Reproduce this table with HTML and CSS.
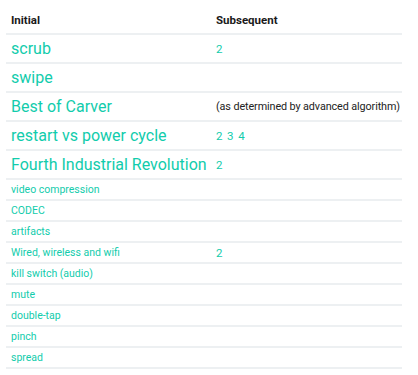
FILE: index.html
```html
<!DOCTYPE html>
<html lang="en">
<head>
<meta charset="utf-8">
<title>Terms</title>
<link rel="stylesheet" href="styles.css">
</head>
<body>
<table class="terms">
  <colgroup><col class="col-a"><col class="col-b"></colgroup>
  <thead>
    <tr><th>Initial</th><th>Subsequent</th></tr>
  </thead>
  <tbody>
    <tr class="big"><td><a>scrub</a></td><td><a class="ref">2</a></td></tr>
    <tr class="big"><td><a>swipe</a></td><td></td></tr>
    <tr class="big"><td><a>Best of Carver</a></td><td class="note">(as determined by advanced algorithm)</td></tr>
    <tr class="big"><td><a>restart vs power cycle</a></td><td><a class="ref">2</a> <a class="ref">3</a> <a class="ref">4</a></td></tr>
    <tr class="big"><td><a>Fourth Industrial Revolution</a></td><td><a class="ref">2</a></td></tr>
    <tr><td><a>video compression</a></td><td></td></tr>
    <tr><td><a>CODEC</a></td><td></td></tr>
    <tr><td><a>artifacts</a></td><td></td></tr>
    <tr><td><a>Wired, wireless and wifi</a></td><td><a class="ref">2</a></td></tr>
    <tr><td><a>kill switch (audio)</a></td><td></td></tr>
    <tr><td><a>mute</a></td><td></td></tr>
    <tr><td><a>double-tap</a></td><td></td></tr>
    <tr><td><a>pinch</a></td><td></td></tr>
    <tr><td><a>spread</a></td><td></td></tr>
  </tbody>
</table>
</body>
</html>
```
FILE: styles.css
```css
html, body {
  margin: 0;
  padding: 0;
  background: #ffffff;
}

body {
  font-family: Roboto, "Open Sans", sans-serif;
  color: #222222;
  padding: 0 16px 0 6px;
}

.terms {
  width: 396px;
  table-layout: fixed;
  border-collapse: collapse;
  margin-top: 12px;
}

.terms .col-a {
  width: 205px;
}

.terms th {
  text-align: left;
  font-size: 11.5px;
  font-weight: 700;
  color: #1a1a1a;
  padding: 0 0 5px 5px;
  height: 16px;
  border-bottom: 2px solid #edf0f2;
}

.terms td {
  padding: 0 0 0 5px;
  height: 19px;
  font-size: 10.5px;
  vertical-align: middle;
  border-bottom: 2px solid #edf0f2;
  white-space: nowrap;
}

.terms tr.big td {
  height: 27px;
}

.terms tr.big td:first-child {
  font-size: 16px;
}

.terms a {
  color: #12ccac;
  text-decoration: none;
}

.terms .ref {
  font-size: 11.5px;
  margin-right: 2px;
}

.terms td.note {
  color: #222222;
  font-size: 10.8px;
  letter-spacing: -0.1px;
}
```
